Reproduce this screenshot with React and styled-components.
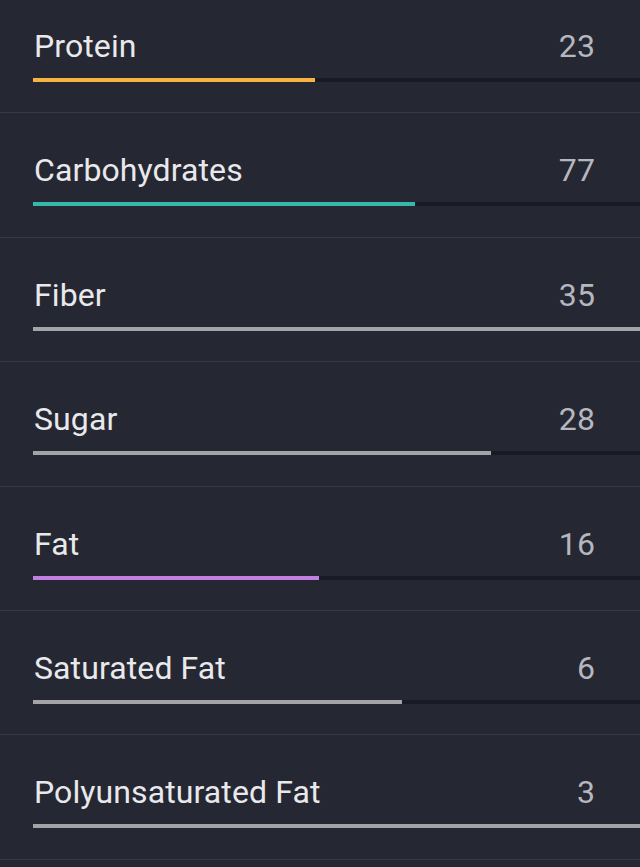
import React from 'react';
import styled, { createGlobalStyle } from 'styled-components';

// --- Global ---
const GlobalStyle = createGlobalStyle`
  html, body {
    margin: 0;
    padding: 0;
    background: #252733;
  }
  body {
    font-family: Roboto, 'Liberation Sans', sans-serif;
    overflow: hidden;
  }
`;

// --- Styled Components ---
const Screen = styled.div`
  width: 640px;
  height: 867px;
  overflow: hidden;
  background: #252733;
`;

const List = styled.div`
  display: flex;
  flex-direction: column;
  margin-top: -11px;
`;

const Row = styled.div`
  box-sizing: border-box;
  height: 124.4px;
  padding-top: 38px;
  border-bottom: 1px solid #383a47;
`;

const Header = styled.div`
  display: flex;
  justify-content: space-between;
  align-items: baseline;
  padding: 0 45px 0 34px;
  line-height: 38px;
  font-size: 32px;
  letter-spacing: 0.1px;
`;

const Label = styled.span`
  color: #e9e9ec;
`;

const Amount = styled.span`
  color: #b6b7bd;
`;

const Track = styled.div`
  margin: 13px 0 0 33px;
  height: 4px;
  background: #181a26;
`;

const Fill = styled.div`
  height: 100%;
  background: ${({ color }) => color};
`;

// --- Data ---
const GRAY = '#a3a3a8';

const nutrients = [
  { name: 'Protein', value: 23, color: '#f6b443', width: 282 },
  { name: 'Carbohydrates', value: 77, color: '#35b9a8', width: 382 },
  { name: 'Fiber', value: 35, color: GRAY, width: 607 },
  { name: 'Sugar', value: 28, color: GRAY, width: 458 },
  { name: 'Fat', value: 16, color: '#c27ee0', width: 286 },
  { name: 'Saturated Fat', value: 6, color: GRAY, width: 369 },
  { name: 'Polyunsaturated Fat', value: 3, color: GRAY, width: 607 },
];

// --- Components ---
const NutrientRow = ({ item }) => (
  <Row>
    <Header>
      <Label>{item.name}</Label>
      <Amount>{item.value}</Amount>
    </Header>
    <Track>
      <Fill color={item.color} style={{ width: item.width }} />
    </Track>
  </Row>
);

export default function App() {
  return (
    <Screen>
      <GlobalStyle />
      <List>
        {nutrients.map((n) => (
          <NutrientRow key={n.name} item={n} />
        ))}
      </List>
    </Screen>
  );
}
